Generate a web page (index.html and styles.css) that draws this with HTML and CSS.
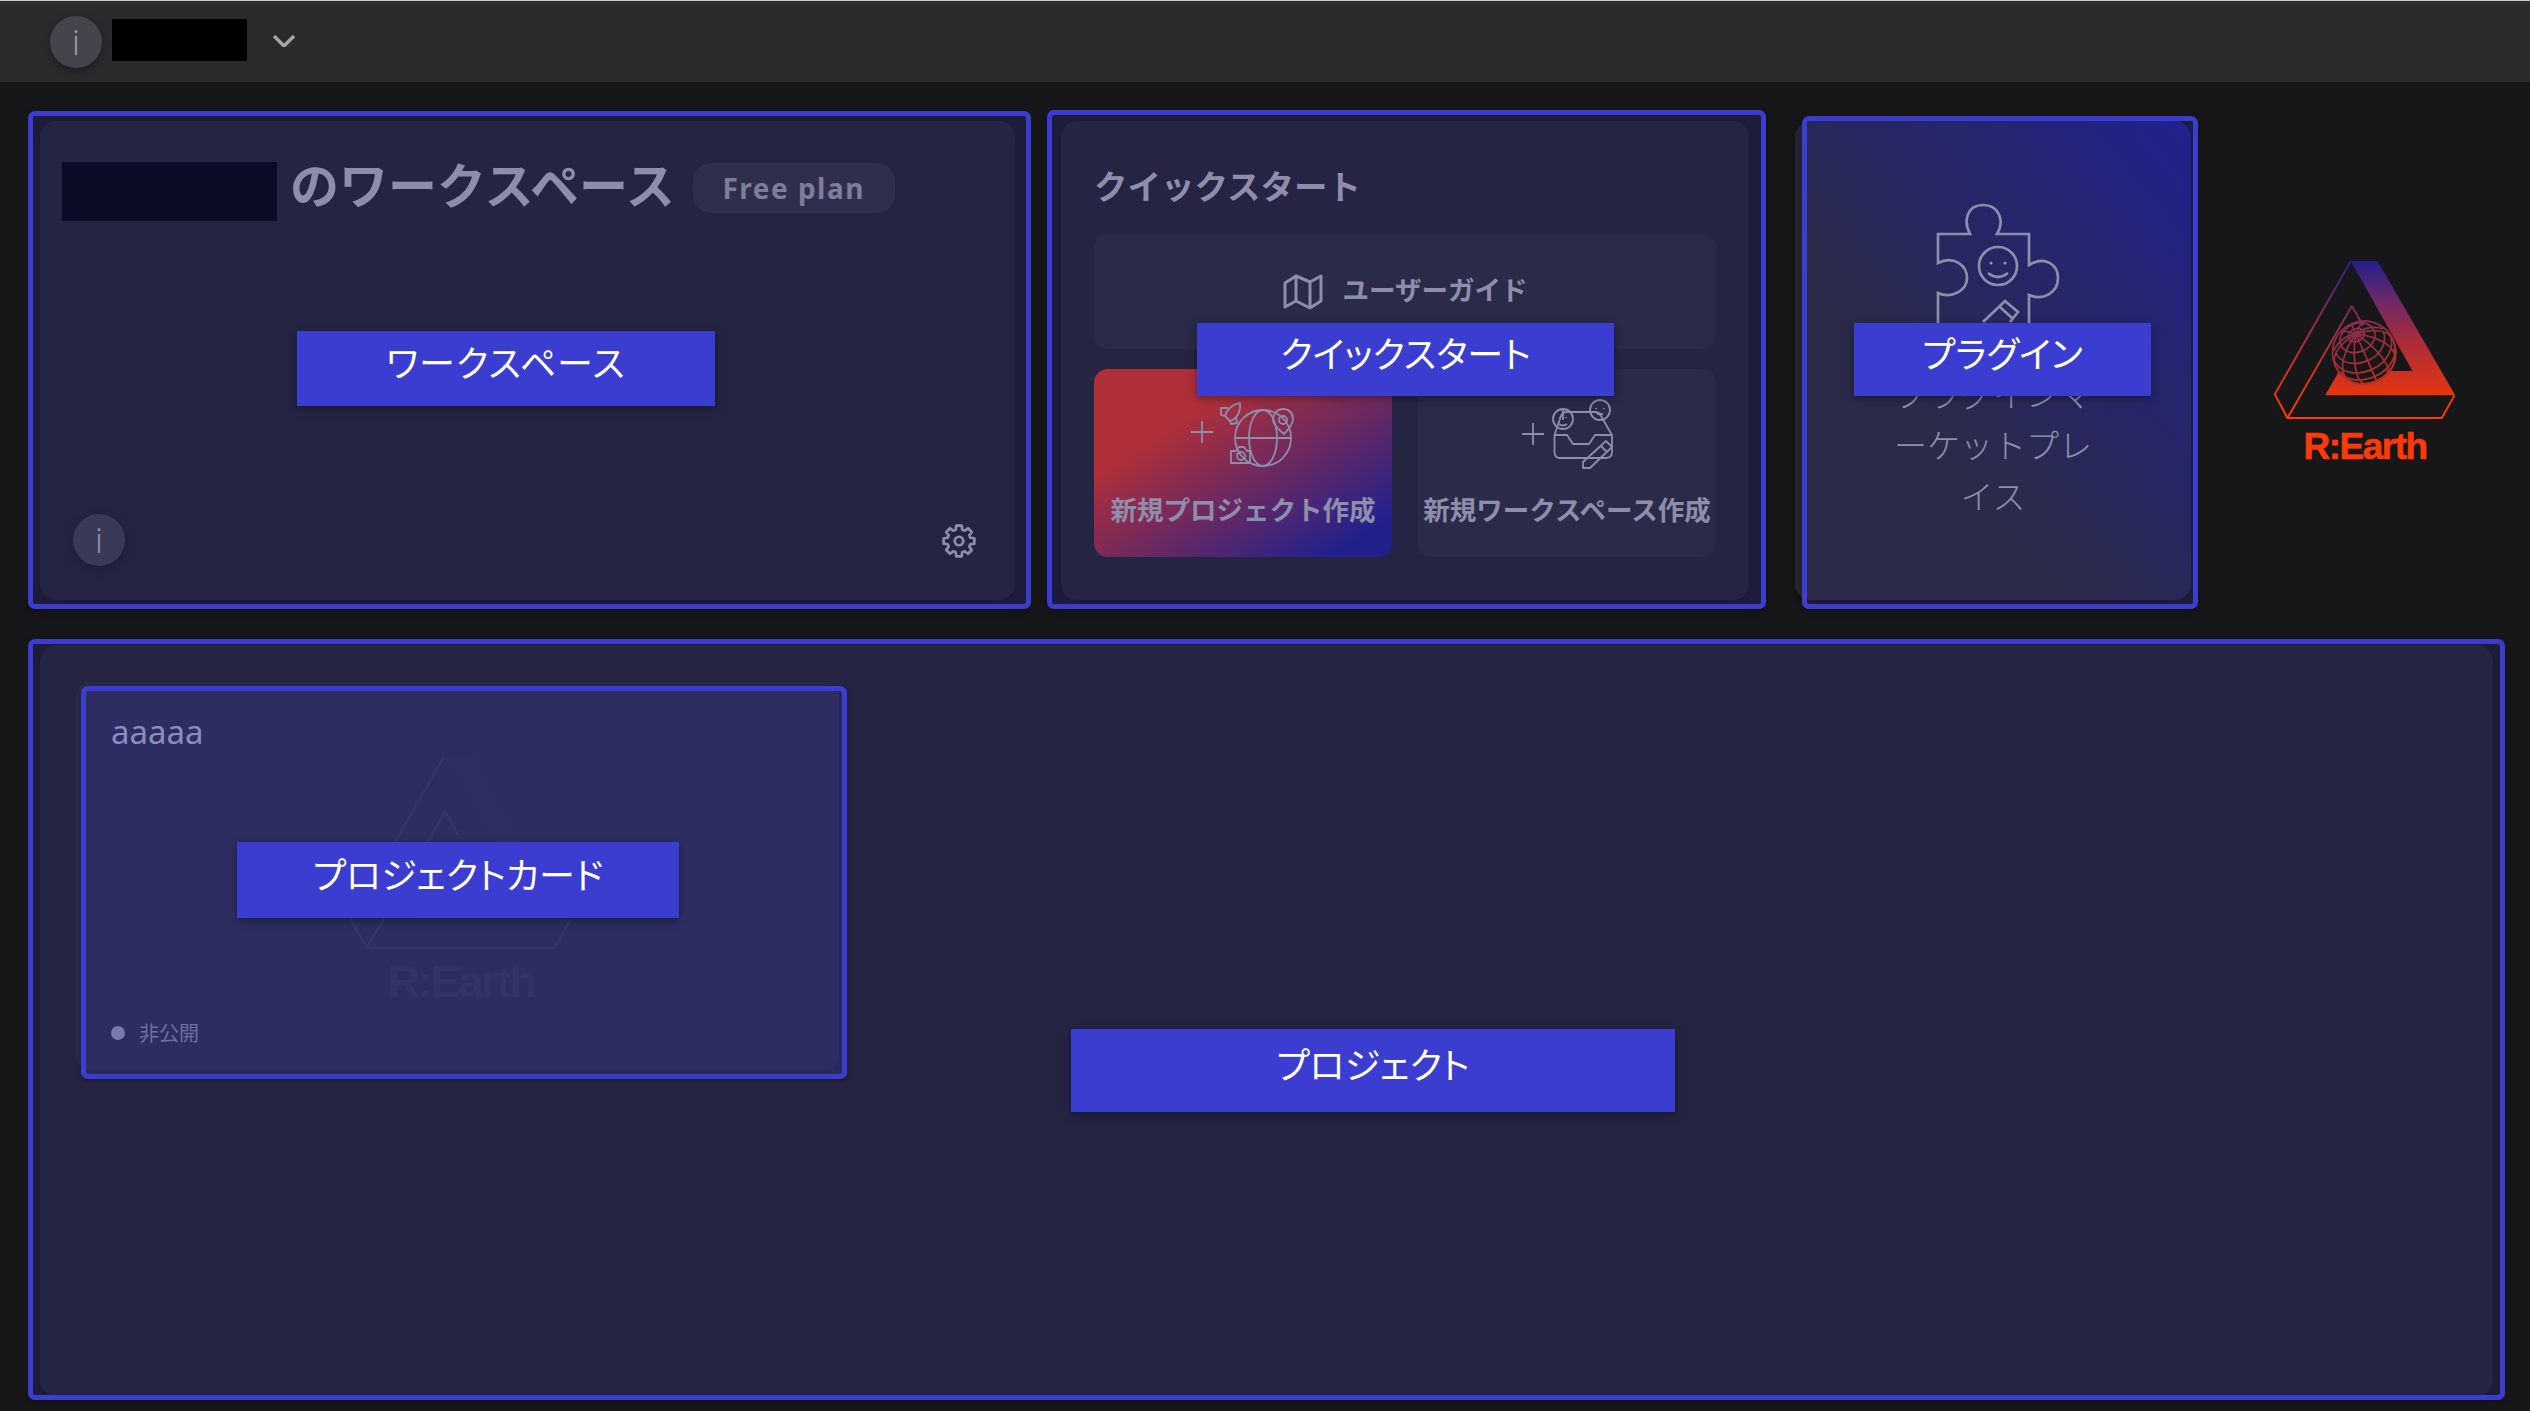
FILE: index.html
```html
<!DOCTYPE html>
<html lang="ja">

<head>
    <meta charset="UTF-8">
    <title>R:Earth Dashboard</title>
    <link rel="stylesheet" href="styles.css">
</head>

<body>
    <header class="topbar">
        <div class="avatar">i</div>
        <div class="redacted-name"></div>
        <svg class="chevron" viewBox="0 0 24 12"><path d="M2 1 L12 11 L22 1"/></svg>
    </header>

    <main class="dashboard">
        <div class="top-row">
            <section class="card workspace">
                <div class="workspace-title">
                    <div class="redacted-title"></div>
                    <h1>のワークスペース</h1>
                    <span class="plan-chip">Free plan</span>
                </div>
                <div class="workspace-foot">
                    <div class="avatar avatar-small">i</div>
                    <svg class="gear" viewBox="0 0 24 24">
                        <g transform="translate(12 12)">
                            <polygon points="-1.91,-10.83 1.91,-10.83 2.29,-7.98 4.02,-7.26 6.31,-9.01 9.01,-6.31 7.26,-4.02 7.98,-2.29 10.83,-1.91 10.83,1.91 7.98,2.29 7.26,4.02 9.01,6.31 6.31,9.01 4.02,7.26 2.29,7.98 1.91,10.83 -1.91,10.83 -2.29,7.98 -4.02,7.26 -6.31,9.01 -9.01,6.31 -7.26,4.02 -7.98,2.29 -10.83,1.91 -10.83,-1.91 -7.98,-2.29 -7.26,-4.02 -9.01,-6.31 -6.31,-9.01 -4.02,-7.26 -2.29,-7.98"/>
                            <circle r="3"/>
                        </g>
                    </svg>
                </div>
                <div class="mark mark-workspace"></div>
                <div class="tag tag-workspace">ワークスペース</div>
            </section>

            <section class="card quick">
                <h2>クイックスタート</h2>
                <div class="guide">
                    <svg class="map-icon" viewBox="0 0 40 36"><path d="M2 9 L13 2 L27 8 L38 2 V27 L27 34 L13 27 L2 33 Z M13 2 V27 M27 8 V34"/></svg>
                    <span>ユーザーガイド</span>
                </div>
                <div class="tiles">
                    <div class="tile tile-project">
                        <svg class="tile-icon" viewBox="0 0 120 84">
                            <path d="M19 27 V49 M8 38 H30"/>
                            <circle cx="80" cy="44" r="28"/>
                            <ellipse cx="80" cy="44" rx="14" ry="28"/>
                            <path d="M52 44 H108"/>
                            <path d="M57 9 C50 10 44 15 42 22 L47 27 C54 25 58 17 57 9 Z M42 22 L38 21 L38 14 L45 14 M47 27 L48 30 L54 29 L53 22"/>
                            <path d="M100 15 C94 15 90 20 90 26 C90 31 96 36 101 40 C105 36 110 31 110 25 C110 19 106 15 100 15 Z"/>
                            <circle cx="100" cy="26" r="4"/>
                            <path d="M48 57 H53 L56 53 H61 L64 57 H67 V69 H48 Z"/>
                            <circle cx="58" cy="62" r="4"/>
                        </svg>
                        <span>新規プロジェクト作成</span>
                    </div>
                    <div class="tile">
                        <svg class="tile-icon" viewBox="0 0 120 84">
                            <path d="M26 29 V51 M15 40 H37"/>
                            <path d="M47.5 41 L54 22 Q55 18 60 18 H88 Q92 18 94 22 L105 41 V58 Q105 64 99 64 H53 Q47.5 64 47.5 58 Z"/>
                            <path d="M47.5 41 H60 L66 50 H82 L88 41 H105"/>
                            <circle cx="56" cy="25" r="10"/>
                            <path d="M52 30 Q56 33 60 30 M53 23 V24 M59 23 V24 M56 15 L56 26"/>
                            <circle cx="93" cy="16" r="10"/>
                            <path d="M89 14 V15 M97 14 V15 M90 20 H96"/>
                            <path d="M99 47 L105 53 L83 74 L76 74 L76 68 Z M94 52 L100 58"/>
                        </svg>
                        <span>新規ワークスペース作成</span>
                    </div>
                </div>
                <div class="mark mark-quick"></div>
                <div class="tag tag-quick">クイックスタート</div>
            </section>

            <section class="card plugin">
                <svg class="puzzle" viewBox="0 0 140 165">
                    <path d="M47 31 H15 V60 C30 52 44 62 44 75 C44 88 28 96 15 90 V165 H106 V92 C120 98 135 90 135 75 C135 62 122 52 106 62 V31 H74 C82 18 76 2 60 2 C44 2 40 18 47 31 Z"/>
                    <circle cx="75" cy="63" r="19"/>
                    <path d="M65 70 Q75 78 85 70"/>
                    <circle class="dot" cx="68" cy="60" r="1.5"/>
                    <circle class="dot" cx="82" cy="60" r="1.5"/>
                    <path d="M60 119 L82 98 L95 109 L87 119 M77 104 L89 115"/>
                </svg>
                <p>プラグインマ<br>ーケットプレ<br>イス</p>
                <div class="mark mark-plugin"></div>
                <div class="tag tag-plugin">プラグイン</div>
            </section>

            <div class="logo">
                <svg class="logo-mark" viewBox="90 50 575 495">
                    <defs>
                        <linearGradient id="logo-grad" gradientUnits="userSpaceOnUse" x1="0" y1="60" x2="0" y2="530">
                            <stop offset="0" stop-color="#20208c"/>
                            <stop offset="0.25" stop-color="#6a2a68"/>
                            <stop offset="0.51" stop-color="#a82c3a"/>
                            <stop offset="0.86" stop-color="#e63510"/>
                            <stop offset="1" stop-color="#ff3c00"/>
                        </linearGradient>
                        <linearGradient id="globe-grad" gradientUnits="userSpaceOnUse" x1="0" y1="-95" x2="0" y2="95">
                            <stop offset="0" stop-color="#8a2c52"/>
                            <stop offset="1" stop-color="#b8301f"/>
                        </linearGradient>
                    </defs>
                    <g fill="url(#logo-grad)">
                        <path id="logo-band" d="M335 62 H415 L648 465 H258 L300 392 H520 Z"/>
                    </g>
                    <circle class="globe-back" cx="375" cy="337" r="95"/>
                    <g fill="none" stroke="url(#logo-grad)" stroke-linejoin="round">
                        <g id="logo-lines" stroke-width="6">
                            <path d="M335 62 L107 462 L145 533 H608 L646 465"/>
                            <path d="M145 533 L338 197 L372 256"/>
                        </g>
                    </g>
                    <g fill="none" stroke="url(#globe-grad)" stroke-width="5" transform="translate(375 337) rotate(-24)">
                        <circle r="95"/>
                        <ellipse cy="-57.8" rx="24.6" ry="19.1"/>
                        <ellipse cy="-49" rx="54.5" ry="42.3"/>
                        <path d="M-77.8 -34.3 A77.8 60.4 0 0 0 77.8 -34.3"/>
                        <path d="M-91.8 -15.5 A91.8 71.2 0 0 0 91.8 -15.5"/>
                        <path d="M-94.6 5.2 A94.6 73.4 0 0 0 94.6 5.2"/>
                        <path d="M-86 25.3 A86 66.8 0 0 0 86 25.3"/>
                        <path d="M0 -60 V95 M0 -60 V-95"/>
                        <path d="M0 -60 C20 -35 47 25 47 64 Q47 75 36 87 M0 -60 C-20 -35 -47 25 -47 64 Q-47 75 -36 87"/>
                        <path d="M0 -60 C30 -45 82 -5 82 37 Q82 50 71 62 M0 -60 C-30 -45 -82 -5 -82 37 Q-82 50 -71 62"/>
                        <path d="M0 -60 C35 -60 95 -40 95 0 M0 -60 C-35 -60 -95 -40 -95 0"/>
                        <path d="M0 -60 Q40 -75 82 -42 M0 -60 Q-40 -75 -82 -42"/>
                        <path d="M0 -60 Q20 -85 41 -85 M0 -60 Q-20 -85 -41 -85"/>
                    </g>
                </svg>
                <div class="logo-text">R:Earth</div>
            </div>
        </div>

        <section class="card projects">
            <article class="project-card">
                <h3>aaaaa</h3>
                <div class="project-logo">
                    <svg class="logo-mark-faded" viewBox="90 50 575 495">
                        <use href="#logo-band" class="faded-band"/>
                        <use href="#logo-lines" class="faded-lines"/>
                    </svg>
                    <div class="logo-text-faded">R:Earth</div>
                </div>
                <div class="project-status"><i></i>非公開</div>
                <div class="mark mark-project-card"></div>
                <div class="tag tag-project-card">プロジェクトカード</div>
            </article>
            <div class="mark mark-projects"></div>
            <div class="tag tag-projects">プロジェクト</div>
        </section>
    </main>
</body>
</html>
```

FILE: styles.css
```css
/* Global Styles */
* {
    margin: 0;
    padding: 0;
    box-sizing: border-box;
}

html,
body {
    height: 1411px;
    overflow: hidden;
}

body {
    background-color: #171719;
    color: #a0a0a4;
    font-family: "Noto Sans", "Noto Sans CJK JP", sans-serif;
}

h1,
h2,
.guide,
.tile span,
.plugin p,
.tag,
.project-status {
    font-family: "Noto Sans CJK JP", "Noto Sans", sans-serif;
}

/* Top bar */
.topbar {
    height: 82px;
    border-top: 1px solid #c9c9c9;
    background-color: #2b2b2e;
    display: flex;
    align-items: center;
    padding-left: 50px;
}

.avatar {
    width: 52px;
    height: 52px;
    border-radius: 50%;
    background-color: #44444c;
    box-shadow: 0 3px 8px rgba(0, 0, 0, 0.35);
    color: #9a9aa0;
    font-size: 34px;
    font-weight: 300;
    line-height: 52px;
    text-align: center;
}

.redacted-name {
    width: 135px;
    height: 42px;
    margin-left: 10px;
    margin-top: -4px;
    background-color: #000;
}

.chevron {
    width: 24px;
    height: 12px;
    margin-left: 25px;
    margin-top: -2px;
    fill: none;
    stroke: #a5a5a5;
    stroke-width: 3.4;
}

/* Page layout */
.dashboard {
    padding: 39px 37px 0 40px;
}

.top-row {
    display: flex;
    gap: 46px;
    height: 479px;
    margin-bottom: 45px;
}

.card {
    position: relative;
    background-color: #201f24;
    border-radius: 16px;
    box-shadow: 0 3px 8px rgba(0, 0, 0, 0.2);
}

/* Overlays */
.mark {
    position: absolute;
    z-index: 1;
    border: 5px solid #3b3cd0;
    border-radius: 7px;
    background-color: rgba(59, 60, 208, 0.18);
    box-shadow: 0 2px 6px rgba(0, 0, 0, 0.25);
}

.mark-workspace { inset: -10px -16px -9px -12px; }
.mark-quick { inset: -11px -17px -9px -14px; }
.mark-plugin { inset: -5px -7px -9px 7px; }
.mark-projects { inset: -6px -12px -4px -12px; }
.mark-project-card { inset: 4px -8px -9px 5px; z-index: 2; }

.tag {
    position: absolute;
    z-index: 3;
    display: flex;
    align-items: center;
    justify-content: center;
    padding-bottom: 15px;
    background-color: #3b3cd0;
    color: #fff;
    font-size: 36px;
    font-feature-settings: "palt";
    box-shadow: 0 3px 8px rgba(0, 0, 0, 0.35);
}

.tag-workspace { left: 257px; top: 210px; width: 418px; height: 75px; letter-spacing: 1.2px; }
.tag-quick { left: 136px; top: 202px; width: 417px; height: 73px; }
.tag-plugin { left: 59px; top: 202px; width: 297px; height: 73px; }
.tag-projects { left: 1031px; top: 384px; width: 604px; height: 83px; }
.tag-project-card { left: 161px; top: 160px; width: 442px; height: 76px; }

/* Workspace card */
.workspace {
    width: 975px;
    display: flex;
    flex-direction: column;
    justify-content: space-between;
    padding: 41px 39px 34px 22px;
}

.workspace-title {
    display: flex;
    align-items: center;
}

.redacted-title {
    width: 215px;
    height: 59px;
    background-color: #000;
}

.workspace-title h1 {
    margin-left: 13px;
    margin-top: -17px;
    font-size: 49px;
    font-weight: 700;
    line-height: 60px;
}

.plan-chip {
    width: 202px;
    height: 50px;
    margin-left: 18px;
    margin-top: -8px;
    border-radius: 18px;
    background-color: #2c2b2f;
    color: #8d8d8f;
    font-size: 28px;
    font-weight: 700;
    letter-spacing: 1.5px;
    line-height: 50px;
    text-align: center;
}

.workspace-foot {
    display: flex;
    justify-content: space-between;
    align-items: center;
    padding-left: 11px;
}

.avatar-small {
    background-color: #3a3a3e;
    color: #9f9fa3;
}

.gear {
    width: 34px;
    height: 34px;
    margin-top: 2px;
    fill: none;
    stroke: #a0a0a4;
    stroke-width: 1.9;
    stroke-linejoin: round;
}

/* Quick start card */
.quick {
    width: 688px;
    padding: 40px 33px 0;
}

.quick h2 {
    font-size: 33.5px;
    font-weight: 700;
    line-height: 48px;
    margin-bottom: 25px;
}

.guide {
    height: 115px;
    margin-bottom: 20px;
    border-radius: 14px;
    background-color: #27272b;
    display: flex;
    align-items: center;
    justify-content: center;
    gap: 20px;
    font-size: 26.5px;
    font-weight: 700;
}

.guide span {
    margin-top: -6px;
}

.map-icon {
    width: 40px;
    height: 36px;
    fill: none;
    stroke: #a0a0a4;
    stroke-width: 3;
    stroke-linejoin: round;
}

.tiles {
    display: grid;
    grid-template-columns: 298px 298px;
    gap: 26px;
}

.tile {
    height: 188px;
    padding-top: 25px;
    border-radius: 14px;
    background-color: #27272b;
    display: flex;
    flex-direction: column;
    align-items: center;
    font-size: 26.5px;
    font-weight: 700;
    white-space: nowrap;
}

.tile-project {
    background-image: linear-gradient(to bottom right, #c92d18 28%, #1a1c7e 90%);
}

.tile-icon {
    width: 120px;
    height: 84px;
    margin-bottom: 11px;
    fill: none;
    stroke: #a0a0a4;
    stroke-width: 1.8;
    stroke-linejoin: round;
    flex: none;
}

/* Plugin card */
.plugin {
    width: 396px;
    padding-top: 82px;
    background-image: linear-gradient(to top right, #27272b 35%, #1a1c7e 100%);
    display: flex;
    flex-direction: column;
    align-items: center;
}

.puzzle {
    width: 140px;
    height: 165px;
    fill: none;
    stroke: #a0a0a4;
    stroke-width: 2.7;
    flex: none;
}

.puzzle .dot {
    fill: #a0a0a4;
    stroke: none;
}

.plugin p {
    font-size: 33px;
    font-weight: 300;
    line-height: 51px;
    text-align: center;
    white-space: nowrap;
}

/* Logo */
.logo {
    flex: 1;
    display: flex;
    flex-direction: column;
    align-items: center;
    justify-content: center;
}

.logo-mark {
    width: 192px;
    height: 165px;
}

.globe-back {
    fill: #171719;
}

.logo-text {
    margin-top: 7px;
    color: #fa3a08;
    font-family: "Liberation Sans", sans-serif;
    font-size: 37px;
    font-weight: 700;
    letter-spacing: -1.5px;
    line-height: 36px;
    -webkit-text-stroke: 0.6px #fa3a08;
}

/* Projects */
.projects {
    height: 751px;
    padding: 37px 36px;
}

.project-card {
    position: relative;
    width: 763px;
    height: 388px;
    border-radius: 14px;
    background-color: #26262b;
}

.project-card h3 {
    position: absolute;
    left: 35px;
    top: 25px;
    color: #b4b4b4;
    font-size: 33px;
    font-weight: 400;
    line-height: 50px;
}

.project-logo {
    position: absolute;
    left: 268px;
    top: 70px;
    display: flex;
    flex-direction: column;
    align-items: center;
}

.logo-mark-faded {
    width: 234px;
    height: 201px;
}

.faded-band {
    fill: #28282d;
}

.faded-lines {
    fill: none;
    stroke: #323237;
}

.logo-text-faded {
    margin-top: 7px;
    color: #2f2f34;
    font-family: "Liberation Sans", sans-serif;
    font-size: 45px;
    font-weight: 700;
    letter-spacing: -2.2px;
    line-height: 44px;
}

.project-status {
    position: absolute;
    left: 35px;
    bottom: 22px;
    display: flex;
    align-items: center;
    gap: 14px;
    color: #888886;
    font-size: 20px;
    line-height: 30px;
}

.project-status i {
    width: 14px;
    height: 14px;
    border-radius: 50%;
    background-color: #999996;
}
```
